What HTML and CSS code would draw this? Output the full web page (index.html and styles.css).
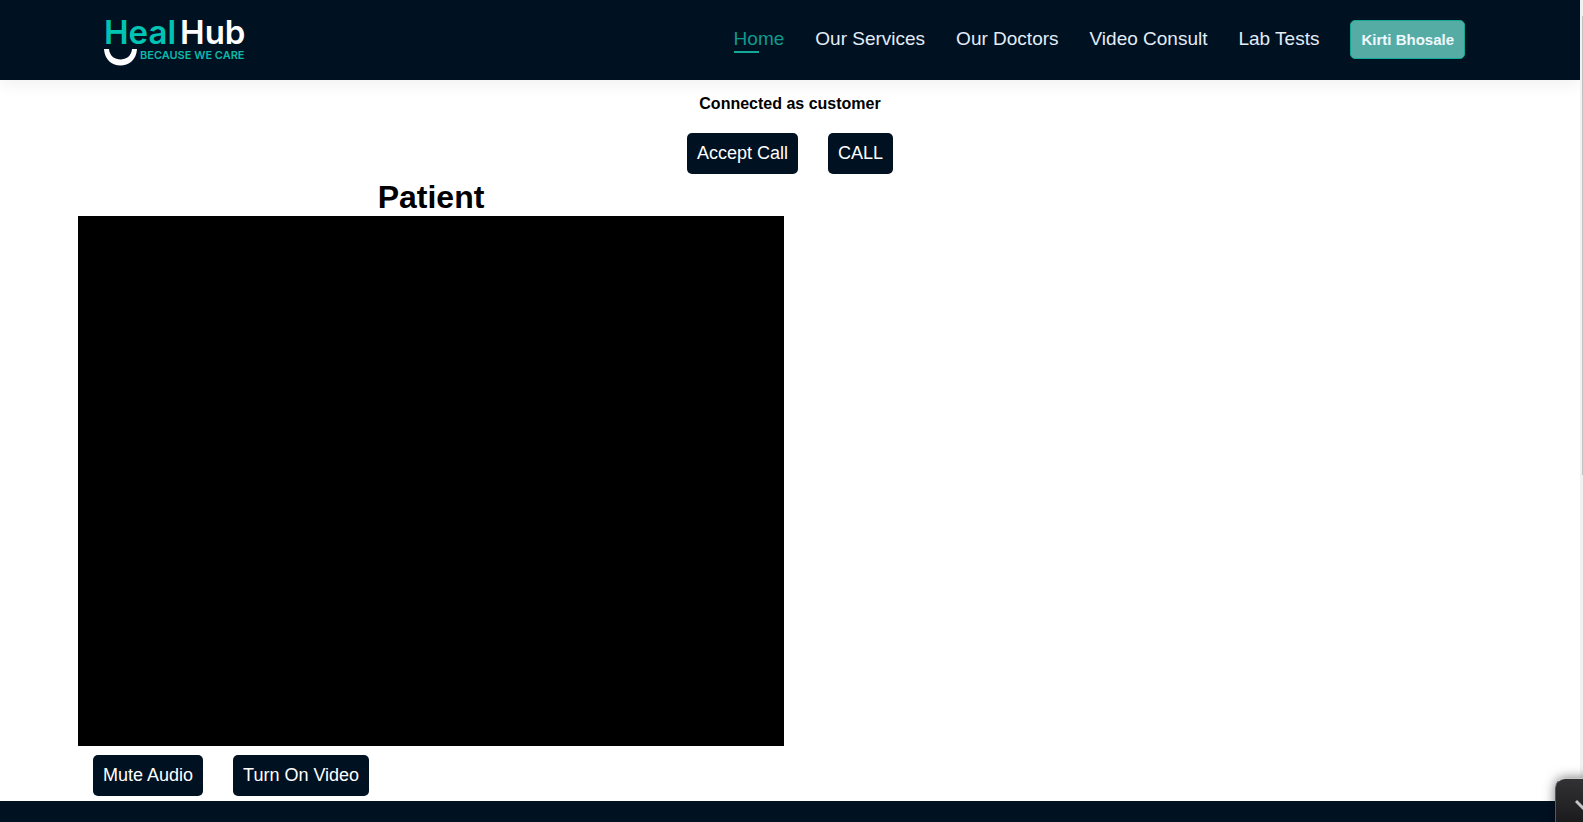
FILE: index.html
```html
<!DOCTYPE html>
<html lang="en">
<head>
<meta charset="utf-8">
<meta name="viewport" content="width=device-width, initial-scale=1">
<title>HealHub</title>
<link rel="stylesheet" href="styles.css">
</head>
<body>
<div class="page">
  <header class="header">
    <a class="logo" href="#">
      <span class="logo-name"><span class="teal">Heal</span><span>Hub</span></span>
      <span class="logo-sub">
        <svg class="smile" viewBox="0 0 33 17" aria-hidden="true"><path d="M0 0H5C6 14 27 14 28 0H33C32 22 1 22 0 0Z" fill="#fff"/></svg>
        <span class="tagline">BECAUSE WE CARE</span>
      </span>
    </a>
    <nav class="nav">
      <a class="nav-link active" href="#">Home</a>
      <a class="nav-link" href="#">Our Services</a>
      <a class="nav-link" href="#">Our Doctors</a>
      <a class="nav-link" href="#">Video Consult</a>
      <a class="nav-link" href="#">Lab Tests</a>
      <button class="user" type="button">Kirti Bhosale</button>
    </nav>
  </header>
  <main class="main">
    <p class="status">Connected as customer</p>
    <div class="actions">
      <button class="btn" type="button">Accept Call</button>
      <button class="btn" type="button">CALL</button>
    </div>
    <div class="streams">
      <section class="stream">
        <h1 class="stream-title">Patient</h1>
        <div class="video"></div>
        <div class="controls">
          <button class="btn" type="button">Mute Audio</button>
          <button class="btn" type="button">Turn On Video</button>
        </div>
      </section>
    </div>
  </main>
  <footer class="footer"></footer>
</div>
<div class="scroll-track"><div class="scroll-thumb"></div></div>
<button class="widget" type="button" aria-label="Collapse">
  <svg class="chevron" viewBox="0 0 20 12" aria-hidden="true"><path d="M1 1L10 10L19 1" fill="none" stroke="#c4c4c4" stroke-width="3"/></svg>
</button>
</body>
</html>
```
FILE: styles.css
```css
* {
  box-sizing: border-box;
  margin: 0;
  padding: 0;
}

body {
  display: flex;
  height: 100vh;
  overflow: hidden;
  background: #fff;
  color: #000;
  font-family: "Liberation Sans", Arial, sans-serif;
}

button {
  font-family: inherit;
  cursor: pointer;
}

.page {
  display: flex;
  flex: 1;
  flex-direction: column;
  overflow: hidden;
}

.header {
  display: flex;
  align-items: center;
  justify-content: space-between;
  min-height: 80px;
  padding: 0 115px 0 104px;
  background: #001122;
  box-shadow: 0 5px 15px rgba(0, 0, 0, 0.06);
}

.logo {
  display: flex;
  flex-direction: column;
  gap: 2px;
  padding-top: 2px;
  color: #fff;
  font-family: Inter, sans-serif;
  font-weight: 600;
  text-decoration: none;
}

.logo-name {
  display: flex;
  gap: 4px;
  font-size: 33px;
  line-height: 30px;
}

.teal {
  color: #00c4b3;
}

.logo-sub {
  display: flex;
  gap: 3px;
}

.smile {
  width: 33px;
  height: 17px;
}

.tagline {
  color: #0cb8a9;
  font-size: 11px;
  line-height: 13px;
}

.nav {
  display: flex;
  align-items: center;
  gap: 31px;
  padding-bottom: 2px;
}

.nav-link {
  color: #e3edf7;
  font-size: 19px;
  line-height: 24px;
  text-decoration: none;
}

.active {
  color: #109b8e;
}

.active::after {
  display: block;
  width: 50%;
  height: 2px;
  margin-bottom: -2px;
  background: #14a899;
  content: "";
}

.user {
  padding: 10px;
  border: 1px solid #14a899;
  border-radius: 5px;
  background: #55aca5;
  color: #f0faff;
  font-size: 15px;
  font-weight: 700;
  line-height: 17px;
}

.main {
  padding: 14px 78px 5px;
}

.status {
  font-size: 16px;
  font-weight: 700;
  line-height: 19px;
  text-align: center;
}

.actions {
  display: flex;
  justify-content: center;
  gap: 30px;
  padding-top: 20px;
}

.btn {
  padding: 10px;
  border: 0;
  border-radius: 5px;
  background: #001122;
  color: #fff;
  font-size: 18px;
  line-height: 21px;
}

.streams {
  display: grid;
  grid-template-columns: 1fr 1fr;
  gap: 12px;
  padding-top: 4px;
}

.stream-title {
  font-size: 32px;
  line-height: 38px;
  text-align: center;
}

.video {
  aspect-ratio: 4 / 3;
  background: #000;
}

.controls {
  display: flex;
  gap: 30px;
  padding: 9px 15px 0;
}

.footer {
  flex: 1;
  background: #001122;
}

.scroll-track {
  width: 3px;
  padding: 16px 0 0 2px;
  background: #f1f1f1;
}

.scroll-thumb {
  height: 57%;
  background: #c1c1c1;
}

.widget {
  position: fixed;
  right: -32px;
  bottom: -12px;
  display: flex;
  align-items: center;
  justify-content: center;
  width: 60px;
  height: 56px;
  border: 1px solid #c8c8c8;
  border-bottom-color: #333;
  border-left-color: #53585d;
  border-radius: 10px;
  background: linear-gradient(#323234, #151517);
  box-shadow: 0 0 12px rgba(0, 0, 0, 0.55);
}

.chevron {
  width: 20px;
  height: 12px;
}
```
